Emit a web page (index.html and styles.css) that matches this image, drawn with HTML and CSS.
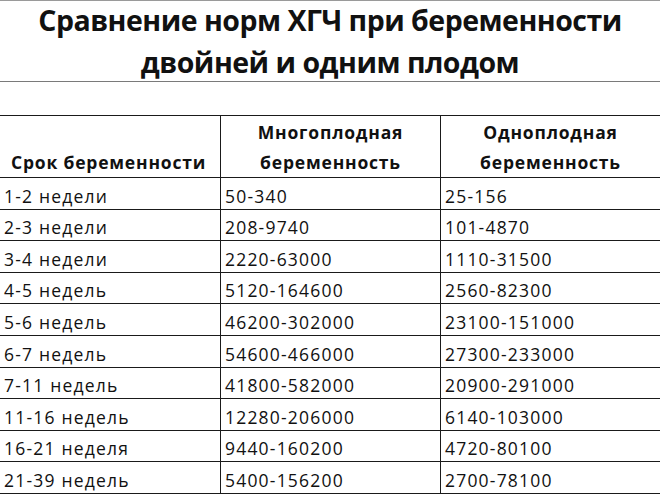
FILE: index.html
```html
<!DOCTYPE html>
<html lang="ru">
<head>
<meta charset="utf-8">
<link rel="stylesheet" href="styles.css">
</head>
<body>
<div class="sheet">
  <div class="title-band">
    <h1 class="title">Сравнение норм ХГЧ при беременности<br>двойней и одним плодом</h1>
  </div>
  <div class="gap"></div>
  <div class="grid">
    <div class="cell head head-left">Срок беременности</div>
    <div class="cell head head-center">Многоплодная<br>беременность</div>
    <div class="cell head head-center last">Одноплодная<br>беременность</div>

    <div class="cell">1-2 недели</div><div class="cell">50-340</div><div class="cell last">25-156</div>
    <div class="cell">2-3 недели</div><div class="cell">208-9740</div><div class="cell last">101-4870</div>
    <div class="cell">3-4 недели</div><div class="cell">2220-63000</div><div class="cell last">1110-31500</div>
    <div class="cell">4-5 недель</div><div class="cell">5120-164600</div><div class="cell last">2560-82300</div>
    <div class="cell">5-6 недель</div><div class="cell">46200-302000</div><div class="cell last">23100-151000</div>
    <div class="cell">6-7 недель</div><div class="cell">54600-466000</div><div class="cell last">27300-233000</div>
    <div class="cell">7-11 недель</div><div class="cell">41800-582000</div><div class="cell last">20900-291000</div>
    <div class="cell">11-16 недель</div><div class="cell">12280-206000</div><div class="cell last">6140-103000</div>
    <div class="cell">16-21 неделя</div><div class="cell">9440-160200</div><div class="cell last">4720-80100</div>
    <div class="cell">21-39 недель</div><div class="cell">5400-156200</div><div class="cell last">2700-78100</div>
  </div>
</div>
</body>
</html>
```
FILE: styles.css
```css
* { box-sizing: border-box; }
html, body {
  margin: 0;
  padding: 0;
  background: #ffffff;
}
body {
  font-family: "Open Sans", "Liberation Sans", sans-serif;
  color: #111111;
  width: 660px;
  height: 495px;
  overflow: hidden;
}
.sheet {
  width: 660px;
}
.title-band {
  height: 82px;
  border-top: 1px solid #9a9a9a;
  border-bottom: 1px solid #7a7a7a;
  overflow: hidden;
}
.title {
  margin: -2px 0 0 0;
  font-size: 28.5px;
  font-weight: 700;
  line-height: 42px;
  letter-spacing: -0.5px;
  text-align: center;
  color: #111;
}
.gap {
  height: 33px;
}
.grid {
  display: grid;
  grid-template-columns: 221px 220px 219px;
  grid-template-rows: 62px;
  grid-auto-rows: 31.6px;
  border-top: 1px solid #1a1a1a;
}
.cell {
  display: flex;
  align-items: flex-end;
  border-right: 1px solid #1a1a1a;
  border-bottom: 1px solid #1a1a1a;
  padding: 0 0 1px 4px;
  font-size: 17.5px;
  line-height: 24px;
  letter-spacing: 1.2px;
  white-space: nowrap;
}
.cell.last {
  border-right: none;
}
.head {
  font-size: 17.5px;
  font-weight: 700;
  line-height: 30px;
  letter-spacing: 0.8px;
  padding: 0 0 0 11px;
}
.head-center {
  justify-content: center;
  text-align: center;
  padding: 0;
}
```
